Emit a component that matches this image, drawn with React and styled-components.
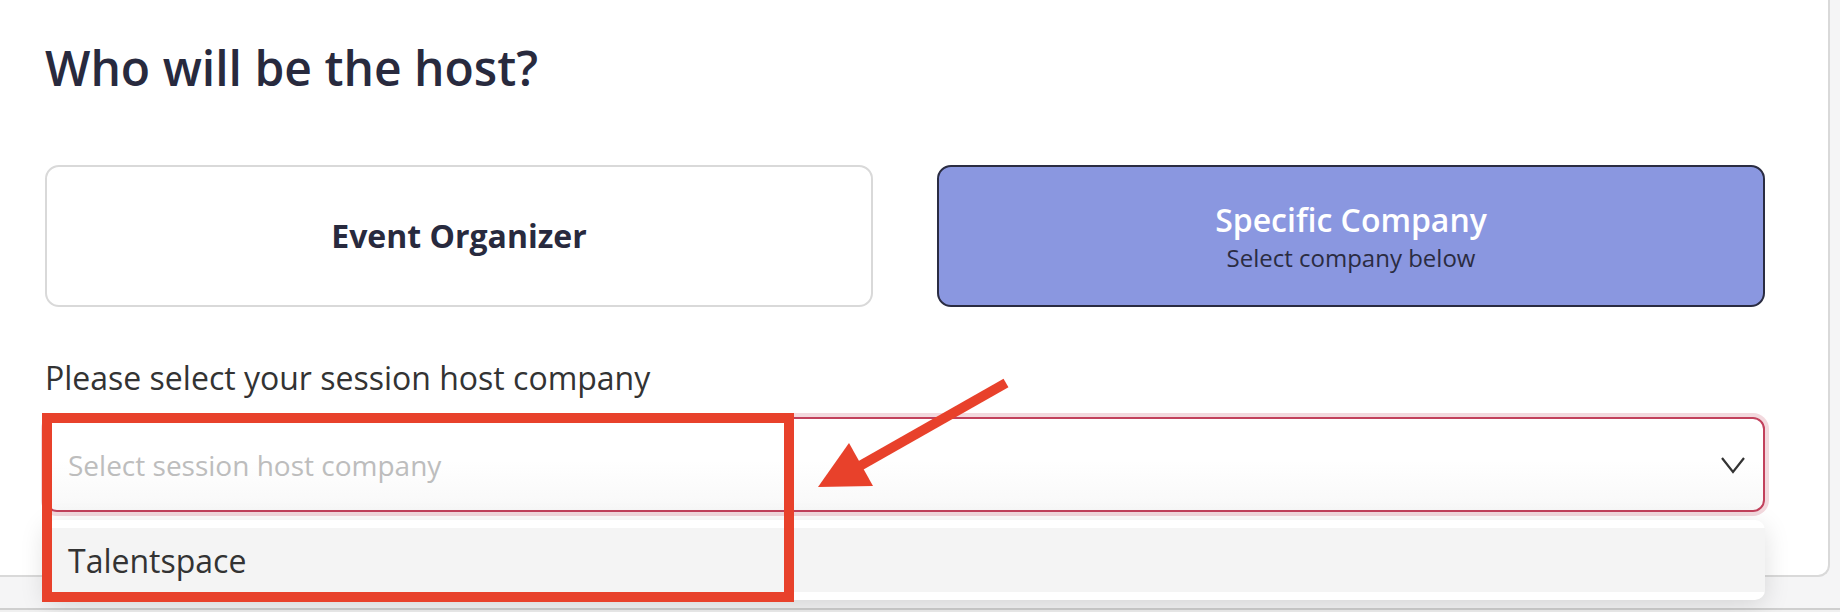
import styled, { createGlobalStyle } from "styled-components"

const Global = createGlobalStyle`
  html, body {
    margin: 0;
    padding: 0;
    background: #f5f5f6;
    font-family: "Open Sans", "Noto Sans", sans-serif;
  }
`

const Page = styled.div`
  position: relative;
  width: 1840px;
  height: 612px;
  overflow: hidden;
`

const Panel = styled.section`
  width: 1830px;
  box-sizing: border-box;
  padding: 36px 63px 63px 45px;
  background: #fff;
  border-right: 2px solid #d9d9d9;
  border-bottom: 2px solid #d9d9d9;
  border-bottom-right-radius: 12px;
`

const NextPanel = styled.div`
  margin-top: 31px;
  height: 40px;
  background: #f0f0f0;
  border-top: 2px solid #cfcfcf;
`

const Title = styled.h2`
  margin: 0 0 65px;
  font-size: 48px;
  line-height: 64px;
  font-weight: 600;
  color: #282a3e;
`

const Choices = styled.div`
  display: grid;
  grid-template-columns: 1fr 1fr;
  gap: 64px;
`

const Choice = styled.button`
  height: 142px;
  display: flex;
  flex-direction: column;
  align-items: center;
  justify-content: center;
  border-radius: 14px;
  border: 2px solid ${({ $active }) => ($active ? "#2a2c42" : "#d9d9d9")};
  background: ${({ $active }) => ($active ? "#8a97e0" : "#fff")};
  font-family: inherit;
  padding: 0;
`

const ChoiceTitle = styled.span`
  font-size: 32px;
  line-height: 40px;
  font-weight: ${({ $active }) => ($active ? 600 : 700)};
  color: ${({ $active }) => ($active ? "#fff" : "#282a3e")};
`

const ChoiceHint = styled.span`
  margin-top: 3px;
  font-size: 24px;
  line-height: 30px;
  color: #2a2c42;
`

const Label = styled.div`
  margin-top: 49px;
  font-size: 32px;
  line-height: 44px;
  color: #333;
`

const Field = styled.div`
  position: relative;
  margin-top: 17px;
`

const Select = styled.div`
  height: 95px;
  box-sizing: border-box;
  display: flex;
  align-items: center;
  justify-content: space-between;
  padding: 0 17px 0 21px;
  border: 2px solid #c2415c;
  border-radius: 12px;
  box-shadow: 0 0 0 4px rgba(194, 65, 92, 0.2);
  background: linear-gradient(#fff 45%, #f8f8f8);
`

const Placeholder = styled.span`
  font-size: 28px;
  color: #bdbdbd;
`

const Menu = styled.ul`
  position: absolute;
  top: calc(100% + 8px);
  left: 0;
  right: 0;
  margin: 0;
  padding: 8px 0;
  list-style: none;
  background: #fff;
  border-radius: 10px;
  box-shadow: 0 6px 26px rgba(0, 0, 0, 0.13);
  z-index: 2;
`

const Option = styled.li`
  height: 64px;
  display: flex;
  align-items: center;
  padding-left: 23px;
  font-size: 32px;
  color: #333;
  background: ${({ $hover }) => ($hover ? "#f4f4f4" : "transparent")};
`

const Highlight = styled.div`
  position: absolute;
  left: 42px;
  top: 413px;
  width: 752px;
  height: 189px;
  box-sizing: border-box;
  border: 10px solid #e8412b;
  pointer-events: none;
  z-index: 5;
`

const Arrow = styled.svg`
  position: absolute;
  left: 0;
  top: 0;
  pointer-events: none;
  z-index: 5;
`

const Chevron = () => (
  <svg width="26" height="18" viewBox="0 0 26 18">
    <polyline points="2,2 13,16 24,2" fill="none" stroke="#333" strokeWidth="2.2" />
  </svg>
)

const App = () => (
  <Page>
    <Global />
    <Panel>
      <Title>Who will be the host?</Title>
      <Choices>
        <Choice>
          <ChoiceTitle>Event Organizer</ChoiceTitle>
        </Choice>
        <Choice $active>
          <ChoiceTitle $active>Specific Company</ChoiceTitle>
          <ChoiceHint>Select company below</ChoiceHint>
        </Choice>
      </Choices>
      <Label>Please select your session host company</Label>
      <Field>
        <Select>
          <Placeholder>Select session host company</Placeholder>
          <Chevron />
        </Select>
        <Menu>
          <Option $hover>Talentspace</Option>
        </Menu>
      </Field>
    </Panel>
    <NextPanel />
    <Highlight />
    <Arrow width="1840" height="612" viewBox="0 0 1840 612">
      <line x1="1006" y1="383" x2="858" y2="467" stroke="#e8412b" strokeWidth="10" />
      <polygon points="818,487 849,443 873,486" fill="#e8412b" />
    </Arrow>
  </Page>
)

export default App
